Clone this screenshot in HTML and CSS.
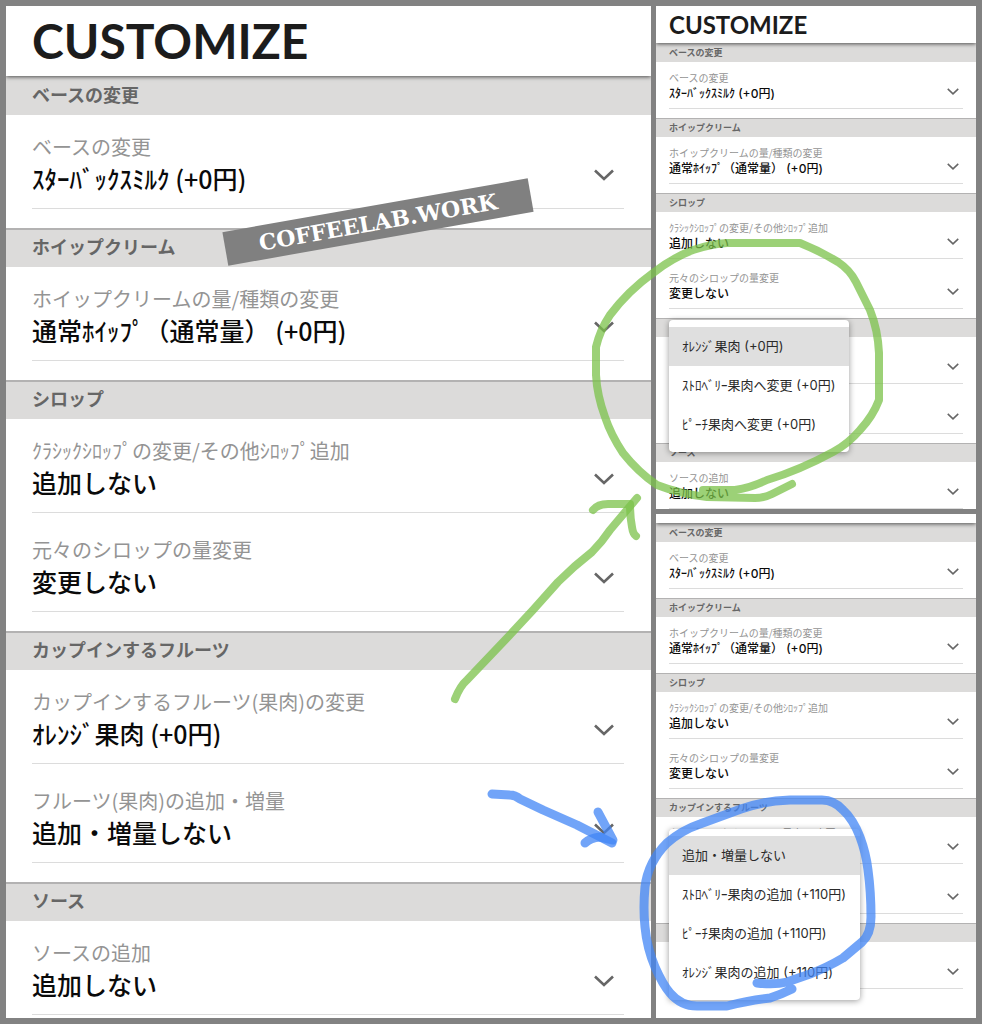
FILE: index.html
```html
<!DOCTYPE html>
<html lang="ja">
<head>
<meta charset="utf-8">
<meta name="viewport" content="width=device-width, initial-scale=1">
<title>CUSTOMIZE</title>
<link rel="stylesheet" href="styles.css">
</head>
<body>
<svg class="sprite" aria-hidden="true">
  <symbol id="chevron" viewBox="0 0 20 12"><path d="M1 1.5 L10 10 L19 1.5" fill="none" stroke="currentColor" stroke-width="2.6"/></symbol>
</svg>
<main class="collage">
  <section class="panel">
    <header class="top"><h1>CUSTOMIZE</h1></header>
    <h2 class="band band-first">ベースの変更</h2>
    <div class="group">
      <label class="field"><span class="name">ベースの変更</span><select class="value"><option>ｽﾀｰﾊﾞｯｸｽﾐﾙｸ (+0円)</option></select><svg class="chevron"><use href="#chevron"/></svg></label>
    </div>
    <h2 class="band">ホイップクリーム</h2>
    <div class="group">
      <label class="field"><span class="name">ホイップクリームの量/種類の変更</span><select class="value"><option>通常ﾎｲｯﾌﾟ（通常量） (+0円)</option></select><svg class="chevron"><use href="#chevron"/></svg></label>
    </div>
    <h2 class="band">シロップ</h2>
    <div class="group">
      <label class="field"><span class="name">ｸﾗｼｯｸｼﾛｯﾌﾟの変更/その他ｼﾛｯﾌﾟ追加</span><select class="value"><option>追加しない</option></select><svg class="chevron"><use href="#chevron"/></svg></label>
      <label class="field"><span class="name">元々のシロップの量変更</span><select class="value"><option>変更しない</option></select><svg class="chevron"><use href="#chevron"/></svg></label>
    </div>
    <h2 class="band">カップインするフルーツ</h2>
    <div class="group">
      <label class="field"><span class="name">カップインするフルーツ(果肉)の変更</span><select class="value"><option>ｵﾚﾝｼﾞ果肉 (+0円)</option></select><svg class="chevron"><use href="#chevron"/></svg></label>
      <label class="field"><span class="name">フルーツ(果肉)の追加・増量</span><select class="value"><option>追加・増量しない</option></select><svg class="chevron"><use href="#chevron"/></svg></label>
    </div>
    <h2 class="band">ソース</h2>
    <div class="group group-last">
      <label class="field"><span class="name">ソースの追加</span><select class="value"><option>追加しない</option></select><svg class="chevron"><use href="#chevron"/></svg></label>
    </div>
  </section>

  <div class="side">
    <section class="panel small">
      <header class="top"><h1>CUSTOMIZE</h1></header>
      <h2 class="band band-first">ベースの変更</h2>
      <div class="group">
        <label class="field"><span class="name">ベースの変更</span><select class="value"><option>ｽﾀｰﾊﾞｯｸｽﾐﾙｸ (+0円)</option></select><svg class="chevron"><use href="#chevron"/></svg></label>
      </div>
      <h2 class="band">ホイップクリーム</h2>
      <div class="group">
        <label class="field"><span class="name">ホイップクリームの量/種類の変更</span><select class="value"><option>通常ﾎｲｯﾌﾟ（通常量） (+0円)</option></select><svg class="chevron"><use href="#chevron"/></svg></label>
      </div>
      <h2 class="band">シロップ</h2>
      <div class="group">
        <label class="field"><span class="name">ｸﾗｼｯｸｼﾛｯﾌﾟの変更/その他ｼﾛｯﾌﾟ追加</span><select class="value"><option>追加しない</option></select><svg class="chevron"><use href="#chevron"/></svg></label>
        <label class="field"><span class="name">元々のシロップの量変更</span><select class="value"><option>変更しない</option></select><svg class="chevron"><use href="#chevron"/></svg></label>
      </div>
      <h2 class="band" aria-label="カップインするフルーツ"></h2>
      <div class="group">
        <div class="field">
          <svg class="chevron"><use href="#chevron"/></svg>
          <div class="menu menu-change" role="listbox" aria-label="果肉の変更">
            <button type="button" role="option" aria-selected="true">ｵﾚﾝｼﾞ果肉 (+0円)</button>
            <button type="button" role="option" aria-selected="false">ｽﾄﾛﾍﾞﾘｰ果肉へ変更 (+0円)</button>
            <button type="button" role="option" aria-selected="false">ﾋﾟｰﾁ果肉へ変更 (+0円)</button>
          </div>
        </div>
        <div class="field"><svg class="chevron"><use href="#chevron"/></svg></div>
      </div>
      <h2 class="band">ソース</h2>
      <div class="group group-last">
        <label class="field"><span class="name">ソースの追加</span><select class="value"><option>追加しない</option></select><svg class="chevron"><use href="#chevron"/></svg></label>
      </div>
    </section>

    <section class="panel small scrolled">
      <header class="top"></header>
      <h2 class="band band-first">ベースの変更</h2>
      <div class="group">
        <label class="field"><span class="name">ベースの変更</span><select class="value"><option>ｽﾀｰﾊﾞｯｸｽﾐﾙｸ (+0円)</option></select><svg class="chevron"><use href="#chevron"/></svg></label>
      </div>
      <h2 class="band">ホイップクリーム</h2>
      <div class="group">
        <label class="field"><span class="name">ホイップクリームの量/種類の変更</span><select class="value"><option>通常ﾎｲｯﾌﾟ（通常量） (+0円)</option></select><svg class="chevron"><use href="#chevron"/></svg></label>
      </div>
      <h2 class="band">シロップ</h2>
      <div class="group">
        <label class="field"><span class="name">ｸﾗｼｯｸｼﾛｯﾌﾟの変更/その他ｼﾛｯﾌﾟ追加</span><select class="value"><option>追加しない</option></select><svg class="chevron"><use href="#chevron"/></svg></label>
        <label class="field"><span class="name">元々のシロップの量変更</span><select class="value"><option>変更しない</option></select><svg class="chevron"><use href="#chevron"/></svg></label>
      </div>
      <h2 class="band">カップインするフルーツ</h2>
      <div class="group">
        <div class="field"><span class="name">カップインするフルーツ(果肉)の変更</span><svg class="chevron"><use href="#chevron"/></svg></div>
        <div class="field">
          <svg class="chevron"><use href="#chevron"/></svg>
          <div class="menu menu-add" role="listbox" aria-label="果肉の追加・増量">
            <button type="button" role="option" aria-selected="true">追加・増量しない</button>
            <button type="button" role="option" aria-selected="false">ｽﾄﾛﾍﾞﾘｰ果肉の追加 (+110円)</button>
            <button type="button" role="option" aria-selected="false">ﾋﾟｰﾁ果肉の追加 (+110円)</button>
            <button type="button" role="option" aria-selected="false">ｵﾚﾝｼﾞ果肉の追加 (+110円)</button>
          </div>
        </div>
      </div>
      <h2 class="band" aria-label="ソース"></h2>
      <div class="group group-last">
        <div class="field"><svg class="chevron"><use href="#chevron"/></svg></div>
      </div>
    </section>
  </div>

  <p class="stamp">COFFEELAB.WORK</p>

  <svg class="marks" viewBox="0 0 982 1024" preserveAspectRatio="none" aria-hidden="true">
    <g class="pen green">
      <path d="M792 484 L772 494 Q764 498 755 498 L707 497 Q680 494 657 485 Q638 472 623 453 Q611 435 605 417 Q597 395 596 375 L596 347 Q600 330 610 315 Q628 291 653 273 Q672 258 693 250 Q711 244 727 243 L800 243 Q820 251 838 262 Q850 270 856 282 L870 310 Q878 330 879 353 L879 400 Q873 416 860 430 Q848 444 833 452 Q800 470 767 480 Q750 488 735 490 L703 490"/>
      <path d="M455 699 Q460 686 467 680 L507 638 L533 610 L558 582 Q574 566 592 552 Q602 542 610 530 L637 498"/>
      <path d="M593 510 Q598 504 608 504 L630 504 Q630 517 632 527 Q633 534 636 536"/>
    </g>
    <g class="pen blue">
      <path d="M492 794 L510 795 Q515 795 520 799 L543 810 L577 825 L612 843"/>
      <path d="M598 812 L613 840 L600 837 Q590 838 585 843"/>
      <path d="M757 983 Q775 985 787 982 L810 974 Q828 967 843 958 L862 942 Q871 934 871 917 Q871 892 868 870 Q866 853 860 837 Q853 819 843 810 Q834 800 822 800 L790 800 Q763 801 741 809 L700 824 Q682 830 667 843 Q648 862 645 887 Q643 908 645 927 Q647 948 655 967 Q663 985 670 993 Q681 1006 697 1006 L727 1006 Q750 1000 770 998 Q782 994 792 989"/>
    </g>
  </svg>
</main>
</body>
</html>
```
FILE: styles.css
```css
* { box-sizing: border-box; }

body {
  margin: 0;
  background: #fff;
  font-family: "Noto Sans CJK JP", sans-serif;
}

.sprite { position: absolute; width: 0; height: 0; }

.collage {
  position: relative;
  display: grid;
  grid-template-columns: 645fr 320fr;
  gap: 5px;
  margin-right: 1px;
  padding: 6px;
  background: #828282;
  overflow: hidden;
}

.side {
  display: flex;
  flex-direction: column;
  gap: 5px;
}

.panel {
  --left: 26px;
  --right: 27px;
  --title: 48px;
  --title-height: 70px;
  --band: 18px;
  --band-height: 39px;
  --band-line: 2px;
  --band-pad: 6px;
  --field-top: 22px;
  --name: 20px;
  --value: 25px;
  --value-gap: 5px;
  --value-height: 32px;
  --field-bottom: 14px;
  --field-height: 94px;
  --field-gap: 5px;
  --group-bottom: 19px;
  --last-bottom: 3px;
  --chevron-width: 20px;
  --chevron-height: 12px;
  --chevron-right: 10px;
  --chevron-bottom: 13px;
  --latin: "Noto Sans CJK JP";
  background: #fff;
  overflow: hidden;
}

.small {
  --left: 13px;
  --right: 13px;
  --title: 24px;
  --title-height: 37px;
  --band: 9px;
  --band-height: 19px;
  --band-line: 1px;
  --band-pad: 2px;
  --field-top: 11px;
  --name: 10px;
  --value: 12px;
  --value-gap: 3px;
  --value-height: 16px;
  --field-bottom: 6px;
  --field-height: 47px;
  --field-gap: 3px;
  --group-bottom: 9px;
  --last-bottom: 0px;
  --chevron-width: 12px;
  --chevron-height: 7px;
  --chevron-right: 4px;
  --chevron-bottom: 7px;
  --latin: Inter;
}

.scrolled {
  --title-height: 9px;
  flex: 1;
}

.top {
  position: relative;
  display: flex;
  align-items: center;
  height: var(--title-height);
  padding-left: var(--left);
  background: #fff;
  box-shadow: 0 1px 4px rgba(0, 0, 0, 0.65);
}

.top h1 {
  margin: 0;
  font: 700 var(--title)/1 Lato, sans-serif;
  color: #1c1c1c;
}

.band {
  display: flex;
  align-items: center;
  height: var(--band-height);
  margin: 0;
  padding: 0 var(--right) var(--band-pad) var(--left);
  border-top: var(--band-line) solid #b3b2b2;
  background: #dcdbda;
  color: #666;
  font-size: var(--band);
  font-weight: 700;
  line-height: 1;
}

.band-first { border-top-color: #dcdbda; }

.group {
  display: flex;
  flex-direction: column;
  gap: var(--field-gap);
  padding: 0 var(--right) var(--group-bottom) var(--left);
}

.group-last { padding-bottom: var(--last-bottom); }

.field {
  position: relative;
  display: grid;
  grid-template-columns: 1fr auto;
  grid-template-rows: var(--name) var(--value-height);
  row-gap: var(--value-gap);
  height: var(--field-height);
  padding: var(--field-top) 0 var(--field-bottom);
  border-bottom: 1px solid #dcdcdc;
}

.name {
  grid-area: 1 / 1;
  color: #949494;
  font-size: var(--name);
  font-weight: 400;
  line-height: 1;
  white-space: nowrap;
}

.value {
  grid-area: 2 / 1;
  width: 100%;
  height: var(--value-height);
  margin: 0;
  padding: 0;
  border: 0;
  appearance: none;
  background: transparent;
  color: #0a0a0a;
  font: 500 var(--value)/1.2 var(--latin), "Noto Sans CJK JP", sans-serif;
}

.chevron {
  grid-area: 1 / 2 / 3 / 3;
  align-self: end;
  width: var(--chevron-width);
  height: var(--chevron-height);
  margin: 0 var(--chevron-right) var(--chevron-bottom) 0;
  color: #666;
}

.menu {
  position: absolute;
  left: 0;
  z-index: 1;
  display: flex;
  flex-direction: column;
  padding: 7px 0 8px;
  border-radius: 4px;
  background: #fff;
  box-shadow: 0 1px 6px rgba(0, 0, 0, 0.4);
}

.menu-change { top: -17px; }

.menu-add { top: -38px; }

.menu button {
  height: 39px;
  padding: 0 14px 0 13px;
  border: 0;
  background: transparent;
  color: #2a2a2a;
  font: 400 13px/1 Inter, "Noto Sans CJK JP", sans-serif;
  text-align: left;
  white-space: nowrap;
}

.menu [aria-selected="true"] { background: #dfdfdf; }

.stamp {
  position: absolute;
  left: 223px;
  top: 205px;
  z-index: 2;
  display: flex;
  align-items: center;
  justify-content: center;
  width: 310px;
  height: 34px;
  margin: 0;
  background: #808080;
  color: #fff;
  font: 700 22px/1 "DejaVu Serif", serif;
  transform: rotate(-10deg);
}

.marks {
  position: absolute;
  inset: 0;
  z-index: 3;
  width: 100%;
  height: 100%;
  pointer-events: none;
}

.pen {
  fill: none;
  stroke-linecap: round;
  stroke-linejoin: round;
}

.green { stroke: rgba(123, 193, 73, 0.75); stroke-width: 8px; }

.blue { stroke: rgba(66, 133, 245, 0.75); stroke-width: 9px; }
```
